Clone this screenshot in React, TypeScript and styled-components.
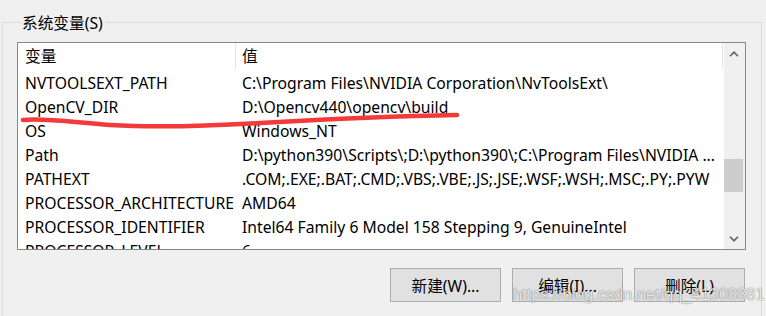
import React from "react";
import styled, { createGlobalStyle } from "styled-components";

const GlobalStyle = createGlobalStyle`
  html, body {
    margin: 0;
    padding: 0;
    background: #f0f0f0;
  }
  body {
    font-family: "Noto Sans", "Noto Sans CJK SC", sans-serif;
    font-size: 15.7px;
    color: #000;
    width: 766px;
    height: 316px;
    overflow: hidden;
  }
`;

const Page = styled.div`
  position: relative;
  width: 766px;
  height: 316px;
  padding-top: 11px;
  box-sizing: border-box;
`;

const Group = styled.fieldset`
  margin: 0 0 0 2px;
  width: 760px;
  box-sizing: border-box;
  border: 1px solid #dcdcdc;
  padding: 0 15px 20px 14px;
  min-width: 0;
`;

const Legend = styled.legend`
  margin-left: 5px;
  padding: 2px 2px 0 0;
  line-height: 20px;
  font-size: 15.7px;
`;

const ListBox = styled.div`
  margin-top: 9px;
  height: 208px;
  box-sizing: border-box;
  border: 1px solid #828790;
  background: #fff;
  display: flex;
  overflow: hidden;
`;

const Content = styled.div`
  flex: 1;
  min-width: 0;
  overflow: hidden;
`;

const Header = styled.div`
  display: grid;
  grid-template-columns: 218px 487px;
  height: 27px;
`;

const HeaderCell = styled.div<{ $pad: number }>`
  display: flex;
  align-items: center;
  padding-left: ${(p) => p.$pad}px;
  border-right: 1px solid #e5e5e5;
  box-sizing: border-box;
  padding-bottom: 2px;
`;

const Row = styled.div`
  display: grid;
  grid-template-columns: 218px 1fr;
  height: 24px;
  box-sizing: border-box;
  padding-top: 1px;
  align-items: center;
`;

const Cell = styled.div<{ $pad: number }>`
  padding-left: ${(p) => p.$pad}px;
  white-space: nowrap;
  overflow: hidden;
`;

const ScrollBar = styled.div`
  width: 21px;
  flex-shrink: 0;
  background: #f0f0f0;
  display: flex;
  flex-direction: column;
`;

const ArrowButton = styled.div`
  height: 21px;
  display: flex;
  align-items: center;
  justify-content: center;
  padding-right: 2px;
`;

const Track = styled.div`
  flex: 1;
`;

const Thumb = styled.div<{ $top: number; $height: number }>`
  margin-top: ${(p) => p.$top}px;
  height: ${(p) => p.$height}px;
  width: 19px;
  background: #cdcdcd;
`;

const Buttons = styled.div`
  display: flex;
  justify-content: flex-end;
  gap: 11px;
  margin-top: 18px;
  padding-right: 1px;
`;

const Button = styled.button`
  width: 111px;
  height: 34px;
  box-sizing: border-box;
  border: 1px solid #adadad;
  background: #e1e1e1;
  font-family: "Noto Sans", "Noto Sans CJK SC", sans-serif;
  font-size: 15.7px;
  color: #000;
  padding: 0;
`;

const Marker = styled.svg`
  position: absolute;
  left: 0;
  top: 0;
  pointer-events: none;
`;

const Watermark = styled.div`
  position: absolute;
  left: 513px;
  top: 285px;
  font-family: "Liberation Sans", Arial, sans-serif;
  font-size: 16.4px;
  color: rgba(255, 255, 255, 0.85);
  text-shadow: 0 0 1px rgba(0, 0, 0, 0.55), 0 0 2px rgba(0, 0, 0, 0.2);
  white-space: nowrap;
  pointer-events: none;
`;

const rows: [string, string][] = [
  ["NVTOOLSEXT_PATH", "C:\\Program Files\\NVIDIA Corporation\\NvToolsExt\\"],
  ["OpenCV_DIR", "D:\\Opencv440\\opencv\\build"],
  ["OS", "Windows_NT"],
  ["Path", "D:\\python390\\Scripts\\;D:\\python390\\;C:\\Program Files\\NVIDIA ..."],
  ["PATHEXT", ".COM;.EXE;.BAT;.CMD;.VBS;.VBE;.JS;.JSE;.WSF;.WSH;.MSC;.PY;.PYW"],
  ["PROCESSOR_ARCHITECTURE", "AMD64"],
  ["PROCESSOR_IDENTIFIER", "Intel64 Family 6 Model 158 Stepping 9, GenuineIntel"],
  ["PROCESSOR_LEVEL", "6"],
];

const Chevron = ({ up }: { up?: boolean }) => (
  <svg width="10" height="6" viewBox="0 0 10 6">
    <path
      d={up ? "M1 5.2 L5 1.2 L9 5.2" : "M1 0.8 L5 4.8 L9 0.8"}
      fill="none"
      stroke="#606060"
      strokeWidth="1.6"
    />
  </svg>
);

export default function App() {
  return (
    <Page>
      <GlobalStyle />
      <Group>
        <Legend>系统变量(S)</Legend>
        <ListBox>
          <Content>
            <Header>
              <HeaderCell $pad={7}>变量</HeaderCell>
              <HeaderCell $pad={6}>值</HeaderCell>
            </Header>
            {rows.map(([name, value]) => (
              <Row key={name}>
                <Cell $pad={7}>{name}</Cell>
                <Cell $pad={6}>{value}</Cell>
              </Row>
            ))}
          </Content>
          <ScrollBar>
            <ArrowButton>
              <Chevron up />
            </ArrowButton>
            <Track>
              <Thumb $top={95} $height={33} />
            </Track>
            <ArrowButton>
              <Chevron />
            </ArrowButton>
          </ScrollBar>
        </ListBox>
        <Buttons>
          <Button>新建(W)...</Button>
          <Button>编辑(I)...</Button>
          <Button>删除(L)</Button>
        </Buttons>
      </Group>
      <Marker width="766" height="316">
        <path
          d="M23 120 C45 118 70 122 110 125 C160 128 210 126 260 123 C330 119 400 116 457 115"
          fill="none"
          stroke="#f23a3a"
          strokeWidth="4.5"
          strokeLinecap="round"
        />
      </Marker>
      <Watermark>https://blog.csdn.net/qq_41308881</Watermark>
    </Page>
  );
}
